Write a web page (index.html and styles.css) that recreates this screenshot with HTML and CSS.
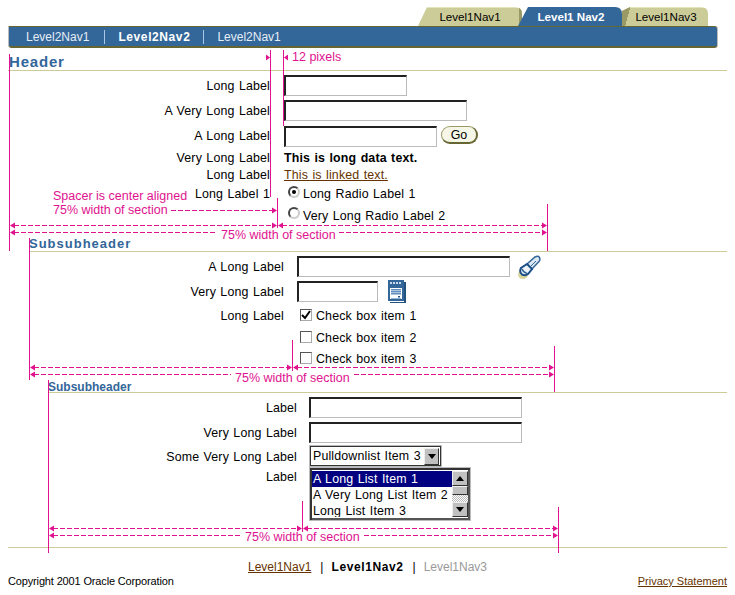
FILE: index.html
```html
<!DOCTYPE html>
<html lang="en">
<head>
<meta charset="utf-8">
<title>Form layout specification</title>
<link rel="stylesheet" href="styles.css">
</head>
<body>
<div class="page">
  <nav class="tabs">
    <a class="tab tab-one">Level1Nav1</a>
    <a class="tab tab-two">Level1 Nav2</a>
    <a class="tab tab-three">Level1Nav3</a>
  </nav>
  <nav class="bar">
    <a class="bar-item">Level2Nav1</a>
    <a class="bar-item bar-current">Level2Nav2</a>
    <a class="bar-item">Level2Nav1</a>
  </nav>

  <section class="sec sec-one">
    <h1 class="header">Header</h1>
    <div class="form form-one">
      <label class="lab">Long Label</label><div class="val"><input class="field w123"></div>
      <label class="lab">A Very Long Label</label><div class="val"><input class="field w183"></div>
      <label class="lab">A Long Label</label><div class="val"><input class="field w153"><button class="go">Go</button></div>
      <label class="lab">Very Long Label</label><div class="val data">This is long data text.</div>
      <label class="lab">Long Label</label><div class="val"><a class="link">This is linked text.</a></div>
      <label class="lab">Long Label 1</label><div class="val choice"><span class="radio radio-on"></span>Long Radio Label 1</div>
      <span></span><div class="val choice"><span class="radio"></span>Very Long Radio Label 2</div>
    </div>
  </section>

  <section class="sec sec-two">
    <h2 class="sub sub-big">Subsubheader</h2>
    <div class="form form-two">
      <label class="lab">A Long Label</label>
      <div class="val"><input class="field w213">
        <svg class="flash" width="23" height="24" viewBox="0 0 23 24">
          <ellipse cx="5" cy="19.500" rx="5" ry="4.500" fill="#d6d69a"/>
          <path d="M9 9 L17 2 Q20 0.500 21.500 2.500 Q22.500 5 21 6.500 L14 14 Z" fill="#dbe7f3" stroke="#336699" stroke-width="1.500"/>
          <path d="M9 9 L3 13 Q1 17 4 19.500 Q7.500 21 10 19 L14 14 Z" fill="#eef3f8" stroke="#1d4f86" stroke-width="2"/>
          <path d="M4 14 Q5 17 9 18.500" fill="none" stroke="#336699" stroke-width="1.500"/>
          <path d="M18 6 L12 12" stroke="#336699" stroke-width="1"/>
        </svg>
      </div>
      <label class="lab">Very Long Label</label>
      <div class="val"><input class="field w81">
        <svg class="cal" width="18" height="23" viewBox="0 0 18 23">
          <rect x="0" y="0" width="16" height="21" fill="#336699"/>
          <rect x="16" y="2" width="2" height="21" fill="#24527f"/>
          <rect x="2" y="22" width="16" height="1" fill="#24527f"/>
          <path d="M2 2h2v2H2zM5 2h2v2H5zM8 2h2v2H8zM11 2h2v2h-2z" fill="#c5d8ec"/>
          <rect x="2" y="6" width="12" height="13" fill="#fff"/>
          <rect x="2" y="6" width="12" height="2" fill="#336699"/>
          <path d="M3 9.500h10M3 11.500h10M3 13.500h10M4 9v6M6 9v6M8 9v6M10 9v6M12 9v6" stroke="#5f8fbf" stroke-width="1"/>
          <rect x="10" y="16" width="2" height="1.500" fill="#24527f"/>
          <rect x="3" y="18" width="10" height="1" fill="#8fb3d9"/>
        </svg>
      </div>
      <label class="lab">Long Label</label><div class="val check-row"><span class="check check-on"><svg width="10" height="10" viewBox="0 0 10 10"><path d="M1 5 L4 8 L9 1" fill="none" stroke="#000" stroke-width="2"/></svg></span>Check box item 1</div>
      <span></span><div class="val check-row"><span class="check"></span>Check box item 2</div>
      <span></span><div class="val check-row"><span class="check"></span>Check box item 3</div>
    </div>
  </section>

  <section class="sec sec-three">
    <h2 class="sub sub-small">Subsubheader</h2>
    <div class="form form-three">
      <label class="lab">Label</label><div class="val"><input class="field w213"></div>
      <label class="lab">Very Long Label</label><div class="val"><input class="field w213"></div>
      <label class="lab">Some Very Long Label</label>
      <div class="val"><div class="select"><span class="select-text">Pulldownlist Item 3</span><span class="btn"><i class="down"></i></span></div></div>
      <label class="lab lab-top">Label</label>
      <div class="val val-top">
        <div class="list">
          <ul class="list-items">
            <li class="list-on">A Long List Item 1</li>
            <li>A Very Long List Item 2</li>
            <li>Long List Item 3</li>
          </ul>
          <div class="scroll">
            <span class="btn sbtn"><i class="up"></i></span>
            <span class="thumb"></span>
            <span class="track"></span>
            <span class="btn sbtn"><i class="down"></i></span>
          </div>
        </div>
      </div>
    </div>
  </section>

  <footer class="foot">
    <div class="foot-nav">
      <a class="link">Level1Nav1</a><span class="pipe">|</span><b class="foot-cur">Level1Nav2</b><span class="pipe">|</span><span class="foot-off">Level1Nav3</span>
    </div>
    <div class="foot-bottom">
      <span class="copy">Copyright 2001 Oracle Corporation</span>
      <a class="link">Privacy Statement</a>
    </div>
  </footer>

  <svg class="notes" width="735" height="595" viewBox="0 0 735 595">
    <g class="ln">
      <path d="M9.500 54V251M270.500 50V197M283.500 50V126M277.500 198V228M547.500 204V251"/>
      <path d="M29.500 238V380M292.500 340V371M554.500 346V392"/>
      <path d="M48.500 380V553M302.500 501V532M558.500 507V553"/>
    </g>
    <g class="dash">
      <path d="M171 210.500H273"/>
      <path d="M14 225.500H273M282 225.500H543M14 232.500H217M339 232.500H543"/>
      <path d="M34 367.500H288M297 367.500H550M34 374.500H231M354 374.500H550"/>
      <path d="M53 528.500H298M307 528.500H554M53 535.500H241M364 535.500H554"/>
    </g>
    <g class="head">
      <path d="M266 54.500L270 57.500L266 60.500ZM288 54.500L284 57.500L288 60.500Z"/>
      <path d="M277 210.500L272 207.500V213.500Z"/>
      <path d="M10 225.500L15 222.500V228.500ZM277 225.500L272 222.500V228.500ZM278 225.500L283 222.500V228.500ZM547 225.500L542 222.500V228.500ZM10 232.500L15 229.500V235.500ZM547 232.500L542 229.500V235.500Z"/>
      <path d="M30 367.500L35 364.500V370.500ZM292 367.500L287 364.500V370.500ZM293 367.500L298 364.500V370.500ZM554 367.500L549 364.500V370.500ZM30 374.500L35 371.500V377.500ZM554 374.500L549 371.500V377.500Z"/>
      <path d="M49 528.500L54 525.500V531.500ZM302 528.500L297 525.500V531.500ZM303 528.500L308 525.500V531.500ZM558 528.500L553 525.500V531.500ZM49 535.500L54 532.500V538.500ZM558 535.500L553 532.500V538.500Z"/>
    </g>
    <text class="note" x="292" y="61">12 pixels</text>
    <text class="note" x="53" y="200">Spacer is center aligned</text>
    <text class="note" x="53" y="214">75% width of section</text>
    <text class="note" x="221" y="239">75% width of section</text>
    <text class="note" x="235" y="382">75% width of section</text>
    <text class="note" x="245" y="541">75% width of section</text>
  </svg>
</div>
</body>
</html>
```
FILE: styles.css
```css
* { box-sizing: border-box; }
html, body { margin: 0; padding: 0; background: #fff; }
body { font-family: "Liberation Sans", Arial, sans-serif; font-size: 12.4px; letter-spacing: .15px; word-spacing: .8px; color: #000; }
.page { position: relative; width: 735px; height: 595px; overflow: hidden; }

/* global tabs */
.tabs { display: flex; justify-content: flex-end; align-items: flex-end; height: 26px; padding: 0 27px 0 0; letter-spacing: 0; word-spacing: 0; }
.tab { display: flex; align-items: center; justify-content: center; height: 19px; font-size: 11.6px; }
.tab-one { width: 104px; padding-left: 0; color: #000;
  background: linear-gradient(to left, #999966 3px, transparent 3px), linear-gradient(#e4e4bb 1px, #cccc99 1px);
  clip-path: path('M0 19 L9 0 L97 0 Q104 0 104 7 L104 19 Z'); }
.tab-two { width: 104px; margin-left: -4px; padding-left: 2px; color: #fff; font-weight: bold; background: #336699; position: relative;
  clip-path: path('M0 19 L10 0 L97 0 Q104 0 104 7 L104 19 Z'); }
.tab-three { width: 86px; padding-left: 2px; color: #000;
  background: linear-gradient(105deg, #999966 8px, transparent 8px), linear-gradient(#e4e4bb 1px, #cccc99 1px);
  clip-path: path('M0 19 L0 4 L8 0 L79 0 Q86 0 86 7 L86 19 Z'); }

/* local bar */
.bar { display: flex; align-items: center; width: 708px; height: 22px; margin-left: 9px; padding-left: 17px; background: #336699; font-size: 12px; letter-spacing: 0;
  border-top: 1px solid #666633; border-bottom: 2px solid #666633; border-radius: 0 3px 3px 3px; box-shadow: 1px 0 0 #bbb, -1px 0 0 #bbb; }
.bar-item { color: #e6eef6; padding-right: 15px; margin-right: 13px; border-right: 1px solid #a9c8e8; line-height: 14px; }
.bar-item:last-child { border-right: 0; }
.bar-current { color: #fff; font-weight: bold; letter-spacing: .6px; padding-right: 13px; }

/* sections */
.sec { margin-right: 8px; }
.sec-one { margin-left: 8px; }
.sec-two { margin-left: 29px; }
.sec-three { margin-left: 48px; }
.header { margin: 0; height: 23px; padding: 5px 0 0 1px; color: #336699; font-size: 15px; line-height: 18px; font-weight: bold; letter-spacing: .8px; border-bottom: 1px solid #cccc99; }
.sub { margin: 0; color: #336699; font-weight: bold; border-bottom: 1px solid #cccc99; }
.sub-big { height: 17px; margin-top: 9px; padding-top: 2px; font-size: 13px; line-height: 14px; letter-spacing: 1px; }
.sub-small { height: 12px; margin-top: 12px; font-size: 12px; line-height: 12px; letter-spacing: 0; }

.form { display: grid; align-items: center; }
.form-one { grid-template-columns: 262px 1fr; column-gap: 14px; grid-template-rows: 25px 25px 26px 17px 17px 21px 22px; margin-top: 2px; }
.form-two { grid-template-columns: 255px 1fr; column-gap: 13px; grid-template-rows: 25px 25px 23px 21px 21px; margin-top: 2px; }
.form-three { grid-template-columns: 249px 1fr; column-gap: 12px; grid-template-rows: 25px 25px 23px 55px; margin-top: 2px; }
.lab { text-align: right; white-space: nowrap; }
.lab-top { align-self: start; padding-top: 2px; }
.val { display: flex; align-items: center; white-space: nowrap; }
.val-top { align-self: start; }

.field { display: block; height: 21px; padding: 0; background: #fff; border-style: solid; border-width: 2px 1px 1px 2px; border-color: #222 #bbb #bbb #222; border-radius: 0; outline: 0; }
.w123 { width: 123px; }
.w183 { width: 183px; }
.w153 { width: 153px; }
.w213 { width: 213px; }
.w81 { width: 81px; }

.go { width: 37px; height: 18px; margin: -2px 0 0 4px; padding: 0; font: inherit; color: #000; background: #f7f7e7; border: 1px solid #999966; border-bottom: 2px solid #666633; border-right: 2px solid #666633; border-radius: 9px; }
.data { font-weight: bold; }
.link { color: #663300; text-decoration: underline; }

.choice { padding-left: 4px; padding-top: 1px; }
.radio { display: inline-block; width: 12px; height: 12px; margin: -5px 3px 0 0; border-radius: 50%; background: #fff; border: 2px solid; border-color: #444 #ccc #ccc #444; position: relative; }
.radio-on::after { content: ""; position: absolute; left: 2px; top: 2px; width: 4px; height: 4px; border-radius: 50%; background: #000; }

.check-row { padding-left: 3px; }
.check { display: inline-flex; width: 12px; height: 12px; margin: -2px 4px 0 0; background: #fff; border: 1px solid; border-color: #555 #aaa #aaa #555; }
.check svg { display: block; }

.flash { margin-left: 8px; }
.cal { margin-left: 10px; }

/* pulldown */
.select { display: flex; align-items: center; width: 133px; height: 22px; margin-top: -1px; border: 1px solid #bbb; box-shadow: inset 0 0 0 1px #333; padding: 2px; }
.select-text { flex: 1; padding-left: 1px; }
.btn { display: flex; align-items: center; justify-content: center; width: 15px; background: #c0c0c0; border: 1px solid; border-color: #eee #333 #333 #eee; }
.select .btn { height: 17px; }
.down { width: 0; height: 0; border: 4px solid transparent; border-top: 5px solid #000; border-bottom: 0; }
.up { width: 0; height: 0; border: 4px solid transparent; border-bottom: 5px solid #000; border-top: 0; }

/* list */
.list { display: flex; width: 162px; height: 54px; margin-top: -1px; padding: 3px 2px 3px 2px; border: 1px solid #bbb; box-shadow: inset 2px 2px 0 #333, inset -2px -2px 0 #555; }
.list-items { flex: 1; margin: 0; padding: 0; list-style: none; white-space: nowrap; overflow: hidden; }
.list-items li { height: 16px; line-height: 16px; padding-left: 1px; }
.list-on { background: #000080; color: #fff; }
.scroll { display: flex; flex-direction: column; width: 16px; }
.sbtn { height: 16px; width: 16px; }
.thumb { height: 9px; background: #c0c0c0; border: 1px solid; border-color: #eee #333 #333 #eee; }
.track { height: 7px; background: repeating-conic-gradient(#bbb 0 25%, #fff 0 50%) 0 0 / 2px 2px; }

/* footer */
.foot { position: relative; margin: 24px 8px 0 8px; padding-top: 10px; border-top: 1px solid #cccc99; letter-spacing: 0; word-spacing: 0; }
.foot-nav { display: flex; justify-content: center; align-items: center; height: 17px; font-size: 12px; }
.pipe { margin: 0 8px 0 9px; }
.foot-off { color: #999; }
.foot-cur { font-weight: bold; letter-spacing: .6px; }
.foot-bottom { display: flex; justify-content: space-between; height: 14px; margin-top: -1px; font-size: 11px; line-height: 14px; }
.copy { letter-spacing: -.15px; }

/* measurement annotations */
.notes { position: absolute; left: 0; top: 0; pointer-events: none; }
.ln path { fill: none; stroke: #e0128f; stroke-width: 1; }
.dash path { fill: none; stroke: #e0128f; stroke-width: 1; stroke-dasharray: 5 2; }
.head path { fill: #e0128f; }
.note { font-family: "Liberation Sans", Arial, sans-serif; font-size: 12.5px; letter-spacing: 0; word-spacing: 0; fill: #e0128f; }
```
